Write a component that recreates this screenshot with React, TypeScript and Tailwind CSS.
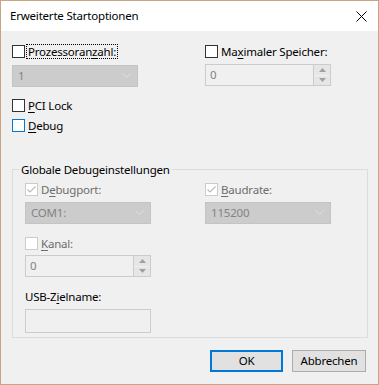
import React from 'react';

function CheckBox({ state = 'normal', checked = false }: { state?: 'normal' | 'focus' | 'disabled'; checked?: boolean }) {
    const border =
        state === 'focus' ? 'border-[#0078d7]' : state === 'disabled' ? 'border-[#cccccc]' : 'border-[#333333]';
    return (
        <span className={`relative w-[13px] h-[13px] shrink-0 border bg-white ${border}`}>
            {checked && (
                <svg className="absolute left-0 top-0" width="11" height="11" viewBox="0 0 11 11">
                    <path d="M1.5 5.5 L4 8 L9.5 2.5" fill="none" stroke="#bcbcbc" strokeWidth="1.2" />
                </svg>
            )}
        </span>
    );
}

function U({ children }: { children: React.ReactNode }) {
    return <span className="underline underline-offset-[2px] decoration-1">{children}</span>;
}

function Check({
    children,
    state,
    checked,
    focusRect,
}: {
    children: React.ReactNode;
    state?: 'normal' | 'focus' | 'disabled';
    checked?: boolean;
    focusRect?: boolean;
}) {
    return (
        <div className="flex items-center h-[15px]">
            <CheckBox state={state} checked={checked} />
            <span
                className={`ml-[2px] px-[1px] leading-[13px] ${
                    focusRect ? 'outline outline-1 outline-dotted outline-black outline-offset-0' : ''
                } ${state === 'disabled' ? 'text-[#6d6d6d]' : 'text-black'}`}
            >
                {children}
            </span>
        </div>
    );
}

function Combo({ value }: { value: string }) {
    return (
        <div className="w-[126px] h-[22px] bg-[#cccccc] border border-[#c4c4c4] flex items-center pl-[5px] pr-[6px] text-[#838383]">
            <span className="flex-1">{value}</span>
            <svg width="9" height="6" viewBox="0 0 9 6">
                <path d="M0.5 0.5 L4.5 4.5 L8.5 0.5" fill="none" stroke="#e0e0e0" strokeWidth="1" />
            </svg>
        </div>
    );
}

function Spin({ value }: { value: string }) {
    return (
        <div className="w-[126px] h-[22px] bg-[#f0f0f0] border border-[#cccccc] flex text-[#838383]">
            <span className="flex-1 pl-[4px] leading-[20px]">{value}</span>
            <div className="w-[17px] flex flex-col border-l border-[#cccccc]">
                <div className="flex-1 flex items-center justify-center bg-[#e6e6e6] border-b border-[#f0f0f0]">
                    <svg width="7" height="4" viewBox="0 0 7 4">
                        <path d="M0 4 L3.5 0 L7 4 Z" fill="#a0a0a0" />
                    </svg>
                </div>
                <div className="flex-1 flex items-center justify-center bg-[#e6e6e6]">
                    <svg width="7" height="4" viewBox="0 0 7 4">
                        <path d="M0 0 L3.5 4 L7 0 Z" fill="#a0a0a0" />
                    </svg>
                </div>
            </div>
        </div>
    );
}

export default function App() {
    return (
        <div
            className="w-[379px] h-[385px] border border-[#c8a482] bg-[#f0f0f0] flex flex-col text-[11.5px] tracking-[-0.2px] text-black"
            style={{ fontFamily: '"Noto Sans", "Liberation Sans", sans-serif' }}
        >
            <div className="h-[30px] bg-white flex items-center pl-[9px] pr-[11px]">
                <span className="flex-1">Erweiterte Startoptionen</span>
                <svg width="11" height="11" viewBox="0 0 11 11">
                    <path d="M0.5 0.5 L10.5 10.5 M10.5 0.5 L0.5 10.5" stroke="#000" strokeWidth="1" />
                </svg>
            </div>

            <div className="flex flex-col pl-[11px] pr-[11px]">
                <div className="flex mt-[13px]">
                    <div className="w-[193px] flex flex-col">
                        <Check focusRect>
                            Prozessoran<U>z</U>ahl:
                        </Check>
                        <div className="mt-[6px]">
                            <Combo value="1" />
                        </div>
                    </div>
                    <div className="flex flex-col">
                        <Check>
                            Ma<U>x</U>imaler Speicher:
                        </Check>
                        <div className="mt-[5px]">
                            <Spin value="0" />
                        </div>
                    </div>
                </div>

                <div className="mt-[11px]">
                    <Check>
                        <U>P</U>CI Lock
                    </Check>
                </div>
                <div className="mt-[5px]">
                    <Check state="focus">
                        <U>D</U>ebug
                    </Check>
                </div>

                <fieldset className="mt-[29px] w-[356px] h-[176px] border border-[#dcdcdc] pl-[12px] pt-0 m-0">
                    <legend className="-ml-[6px] px-[2px] leading-[15px]">Globale Debugeinstellungen</legend>
                    <div className="flex mt-[5px]">
                        <div className="w-[180px] flex flex-col">
                            <Check state="disabled" checked>
                                D<U>e</U>bugport:
                            </Check>
                            <div className="mt-[5px]">
                                <Combo value="COM1:" />
                            </div>
                        </div>
                        <div className="flex flex-col">
                            <Check state="disabled" checked>
                                <U>B</U>audrate:
                            </Check>
                            <div className="mt-[5px]">
                                <Combo value="115200" />
                            </div>
                        </div>
                    </div>
                    <div className="mt-[12px]">
                        <Check state="disabled">
                            <U>K</U>anal:
                        </Check>
                    </div>
                    <div className="mt-[4px]">
                        <Spin value="0" />
                    </div>
                    <div className="mt-[12px] leading-[16px]">
                        USB-Z<U>i</U>elname:
                    </div>
                    <div className="mt-[4px] w-[126px] h-[24px] border border-[#cccccc] bg-[#f0f0f0]" />
                </fieldset>

                <div className="flex justify-end mt-[12px] gap-[9px] pr-[1px]">
                    <button className="w-[73px] h-[22px] border-2 border-[#0078d7] bg-[#e1e1e1] leading-[18px]">OK</button>
                    <button className="w-[74px] h-[22px] border border-[#adadad] bg-[#e1e1e1] leading-[20px]">
                        Abbrechen
                    </button>
                </div>
            </div>
        </div>
    );
}
